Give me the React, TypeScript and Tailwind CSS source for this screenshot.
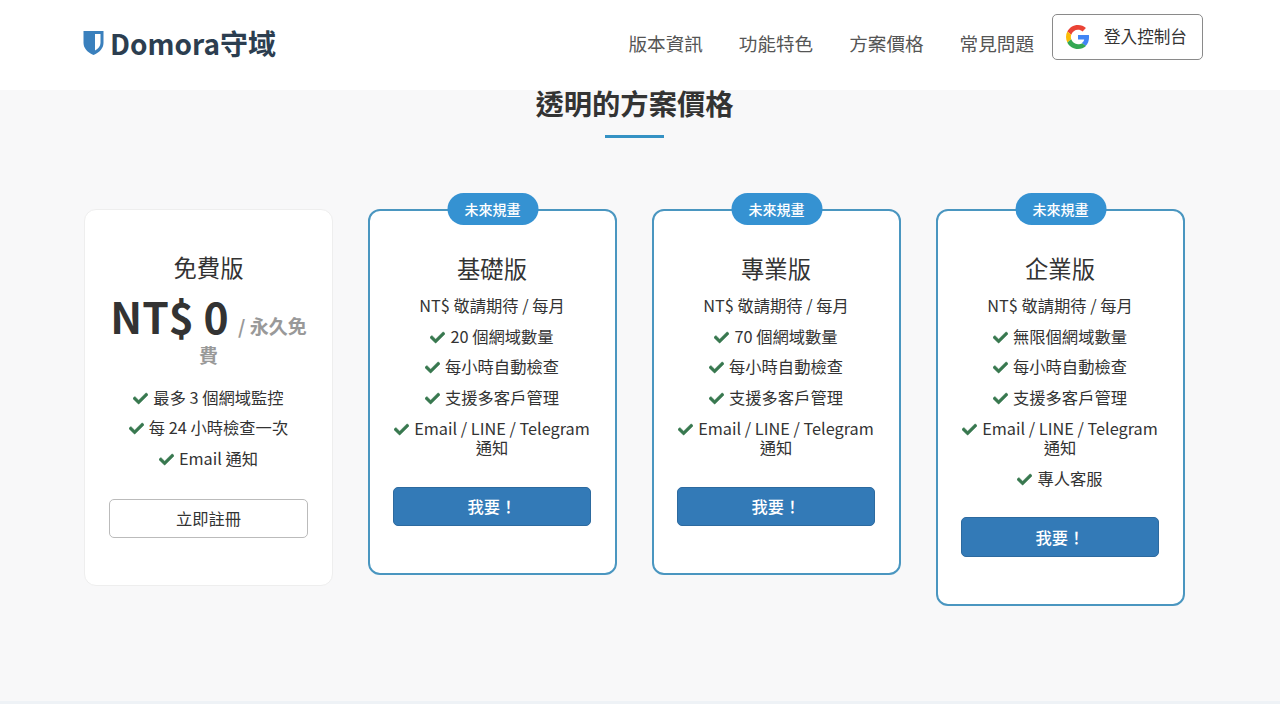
const font = { fontFamily: '"Noto Sans CJK TC", sans-serif' };

function Check() {
  return (
    <svg viewBox="0 0 512 512" className="inline-block w-[15px] h-[15px] mr-[5px] align-[-2px] fill-[#38784f]">
      <path d="M173.9 439.4L7.500 273c-10-10-10-26.200 0-36.200l36.200-36.200c10-10 26.200-10 36.200 0L192 312.700 432.100 72.600c10-10 26.200-10 36.200 0l36.200 36.200c10 10 10 26.200 0 36.200L210.100 439.400c-10 10-26.200 10-36.200 0z" stroke="#38784f" strokeWidth="16" />
    </svg>
  );
}

function Google() {
  return (
    <svg viewBox="0 0 48 48" className="w-6 h-6">
      <path fill="#EA4335" d="M24 9.500c3.500 0 6.700 1.300 9.100 3.500l6.800-6.800C35.800 2.400 30.300 0 24 0 14.600 0 6.500 5.400 2.600 13.200l7.900 6.100C12.400 13.700 17.700 9.500 24 9.500z" />
      <path fill="#4285F4" d="M46.100 24.500c0-1.600-.1-3.100-.4-4.500H24v9h12.400c-.5 2.900-2.200 5.400-4.700 7l7.600 5.900c4.400-4.100 6.800-10.100 6.800-17.400z" />
      <path fill="#FBBC05" d="M10.500 28.700c-.5-1.400-.8-3-.8-4.700s.3-3.300.8-4.700l-7.900-6.100C.9 16.500 0 20.100 0 24s.9 7.500 2.600 10.800l7.900-6.100z" />
      <path fill="#34A853" d="M24 48c6.500 0 11.900-2.100 15.900-5.800l-7.600-5.900c-2.200 1.400-4.900 2.300-8.300 2.300-6.300 0-11.600-4.200-13.500-9.900l-7.900 6.100C6.500 42.600 14.600 48 24 48z" />
    </svg>
  );
}

function Shield() {
  return (
    <svg viewBox="0 0 20 24" className="w-[21px] h-[24px]">
      <path fill="#3a80bd" d="M0 0h20v12c0 5-4 9.500-10 12C4 21.500 0 17 0 12z" />
      <path fill="#fff" d="M11.500 3H17v9c0 3-2.200 5.700-5.500 7.500z" />
    </svg>
  );
}

type Plan = { name: string; features: string[] };

const plans: Plan[] = [
  { name: '基礎版', features: ['20 個網域數量', '每小時自動檢查', '支援多客戶管理', 'Email / LINE / Telegram 通知'] },
  { name: '專業版', features: ['70 個網域數量', '每小時自動檢查', '支援多客戶管理', 'Email / LINE / Telegram 通知'] },
  { name: '企業版', features: ['無限個網域數量', '每小時自動檢查', '支援多客戶管理', 'Email / LINE / Telegram 通知', '專人客服'] },
];

function Feature({ text }: { text: string }) {
  return (
    <li className="mb-[11.5px] text-[16.3px] leading-[19.2px] text-[#333]">
      <Check />
      {text}
    </li>
  );
}

function PlanCard({ plan }: { plan: Plan }) {
  return (
    <div className="relative w-[249px] rounded-[12px] border-2 border-[#4a96c0] bg-white pl-[23px] pr-[24px] pt-[38px] pb-[47px] text-center">
      <span className="absolute left-1/2 top-[-18px] -translate-x-1/2 rounded-[16px] bg-[#3592d2] px-[17.5px] py-[6px] text-[14px] leading-[20px] font-medium text-white whitespace-nowrap">
        未來規畫
      </span>
      <h3 className="text-[23.3px] leading-[38px] text-[#333] mb-[9px]">{plan.name}</h3>
      <p className="text-[16.3px] leading-[19.2px] text-[#333] mb-[11.4px]">NT$ 敬請期待 / 每月</p>
      <ul className="mb-[29.6px]">
        {plan.features.map((f) => (
          <Feature key={f} text={f} />
        ))}
      </ul>
      <button className="block w-full h-[39.5px] rounded-[5px] border border-[#2d6a9f] bg-[#337ab7] text-[16.3px] font-medium text-white">
        我要！
      </button>
    </div>
  );
}

export default function App() {
  return (
    <div className="h-[704px] overflow-hidden bg-[#f8f8f9] flex flex-col" style={font}>
      <header className="h-[90px] shrink-0 bg-white flex items-center justify-between pl-[83px] pr-[77px] pb-[4px]">
        <div className="flex items-center gap-[6px]">
          <Shield />
          <span className="text-[28px] font-bold text-[#2c3e50]">Domora守域</span>
        </div>
        <nav className="flex items-center gap-[36px] text-[18.6px] text-[#555]">
          <a>版本資訊</a>
          <a>功能特色</a>
          <a>方案價格</a>
          <a>常見問題</a>
          <button className="-ml-[18px] -mt-[12px] flex items-center gap-[14px] w-[151px] h-[46px] pl-[13px] rounded-[5px] border border-[#8a8a8a] bg-white text-[16.6px] text-[#333]">
            <Google />
            <span className="-mt-[2px]">登入控制台</span>
          </button>
        </nav>
      </header>

      <main className="flex-1 pl-[84px] pr-[95px]">
        <h2 className="-mt-[2px] text-center text-[28.3px] leading-[30px] font-bold text-[#333]">透明的方案價格</h2>
        <div className="mx-auto mt-[17px] h-[3px] w-[59px] bg-[#3592c4]" />

        <div className="mt-[71px] flex items-start justify-between">
          <div className="w-[249px] rounded-[12px] border border-[#eeeeee] bg-white px-[24px] pt-[38px] pb-[47px] text-center">
            <h3 className="text-[23.3px] leading-[38px] text-[#333]">免費版</h3>
            <p className="mt-[6px] mb-[18.5px] leading-[29px] font-bold text-[#999] text-[19px]">
              <span className="text-[42.6px] leading-[48px] text-[#333]">NT$ 0</span>
              <span className="ml-[5px]"> / 永久免費</span>
            </p>
            <ul className="mb-[30.5px]">
              {['最多 3 個網域監控', '每 24 小時檢查一次', 'Email 通知'].map((f) => (
                <Feature key={f} text={f} />
              ))}
            </ul>
            <button className="block w-full h-[39.5px] rounded-[5px] border border-[#bbbbbb] bg-white text-[16.3px] text-[#333]">
              立即註冊
            </button>
          </div>
          {plans.map((p) => (
            <PlanCard key={p.name} plan={p} />
          ))}
        </div>
      </main>

      <div className="h-[3px] shrink-0 bg-[#eef2f6]" />
    </div>
  );
}
